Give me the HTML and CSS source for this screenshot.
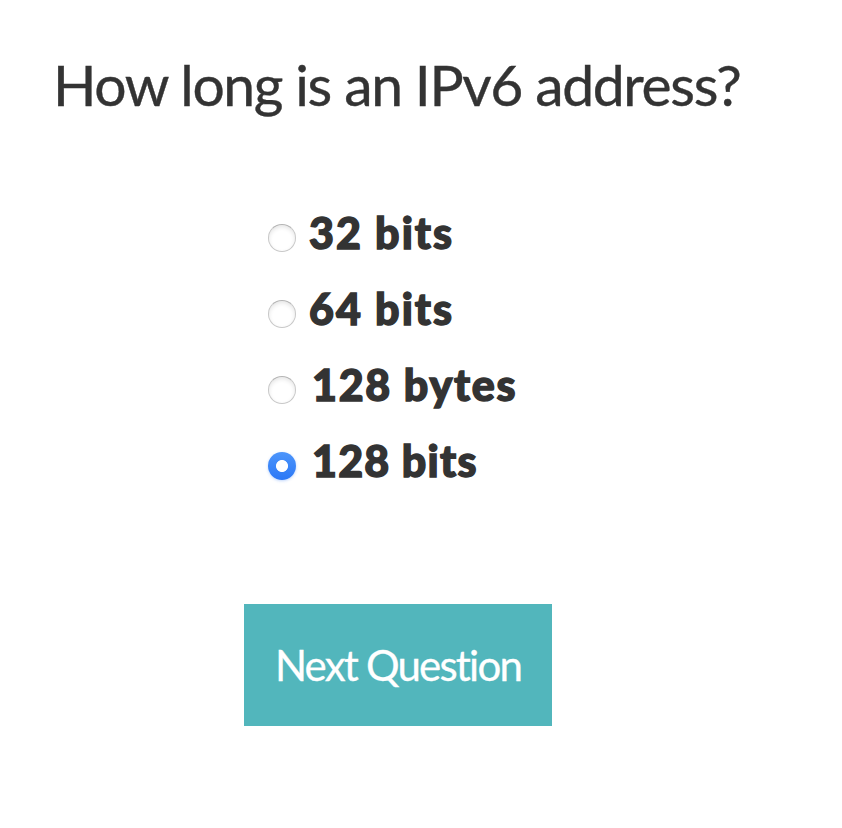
FILE: index.html
```html
<!DOCTYPE html>
<html lang="en">
<head>
<meta charset="utf-8">
<title>Quiz</title>
<link rel="stylesheet" href="styles.css">
</head>
<body>
<main class="quiz">
  <h1 class="question"><span>How long is an IPv6 address?</span></h1>
  <form class="form">
    <div class="options">
      <label class="option"><input class="radio" type="radio" name="answer"><span class="text">32 bits</span></label>
      <label class="option"><input class="radio" type="radio" name="answer"><span class="text">64 bits</span></label>
      <label class="option option-wide"><input class="radio" type="radio" name="answer"><span class="text">128 bytes</span></label>
      <label class="option option-wide option-last"><input class="radio" type="radio" name="answer" checked><span class="text">128 bits</span></label>
    </div>
    <button class="next" type="button">Next Question</button>
  </form>
</main>
</body>
</html>
```
FILE: styles.css
```css
* { box-sizing: border-box; }
body {
  margin: 0;
  background: #fff;
  color: #333;
  font-family: Lato, sans-serif;
  font-variant-ligatures: none;
}
.quiz {
  width: 796px;
  padding-top: 50px;
}
.question {
  margin: 0 0 75px;
  padding-left: 53px;
  font-size: 57px;
  font-weight: 400;
  line-height: 68px;
  letter-spacing: -1.36px;
  white-space: nowrap;
  -webkit-text-stroke: 0.4px currentColor;
}
.form {
  display: flex;
  flex-direction: column;
}
.options {
  display: flex;
  flex-direction: column;
  padding-left: 268px;
}
.option {
  display: flex;
  align-items: center;
  gap: 13px;
  height: 76px;
  font-size: 43px;
  font-weight: 900;
  letter-spacing: 2px;
  white-space: nowrap;
}
.option-wide {
  gap: 16px;
  letter-spacing: 1.7px;
}
.option-last {
  letter-spacing: 1.2px;
}
.text {
  padding-top: 2px;
  -webkit-text-stroke: 1.4px currentColor;
}
.radio {
  appearance: none;
  flex: none;
  width: 28px;
  height: 28px;
  margin: 14px 0 0;
  border: 1px solid #c8c8c8;
  border-top-color: #b4b4b4;
  border-radius: 50%;
  background: #fff;
  box-shadow: inset 0 2px 4px rgba(0, 0, 0, 0.1);
}
.radio:checked {
  border: 0;
  background: radial-gradient(circle, #fff 5.6px, transparent 6.4px), linear-gradient(#4c95fb, #2c78f6);
  box-shadow: 0 1px 3px rgba(44, 120, 246, 0.3);
}
.next {
  align-self: center;
  width: 308px;
  height: 122px;
  margin-top: 107px;
  padding: 0;
  border: 0;
  background: #52b6bc;
  color: #fff;
  font: 400 42px Lato, sans-serif;
  font-variant-ligatures: none;
  letter-spacing: -1.8px;
  white-space: nowrap;
  -webkit-text-stroke: 0.3px currentColor;
}
```
